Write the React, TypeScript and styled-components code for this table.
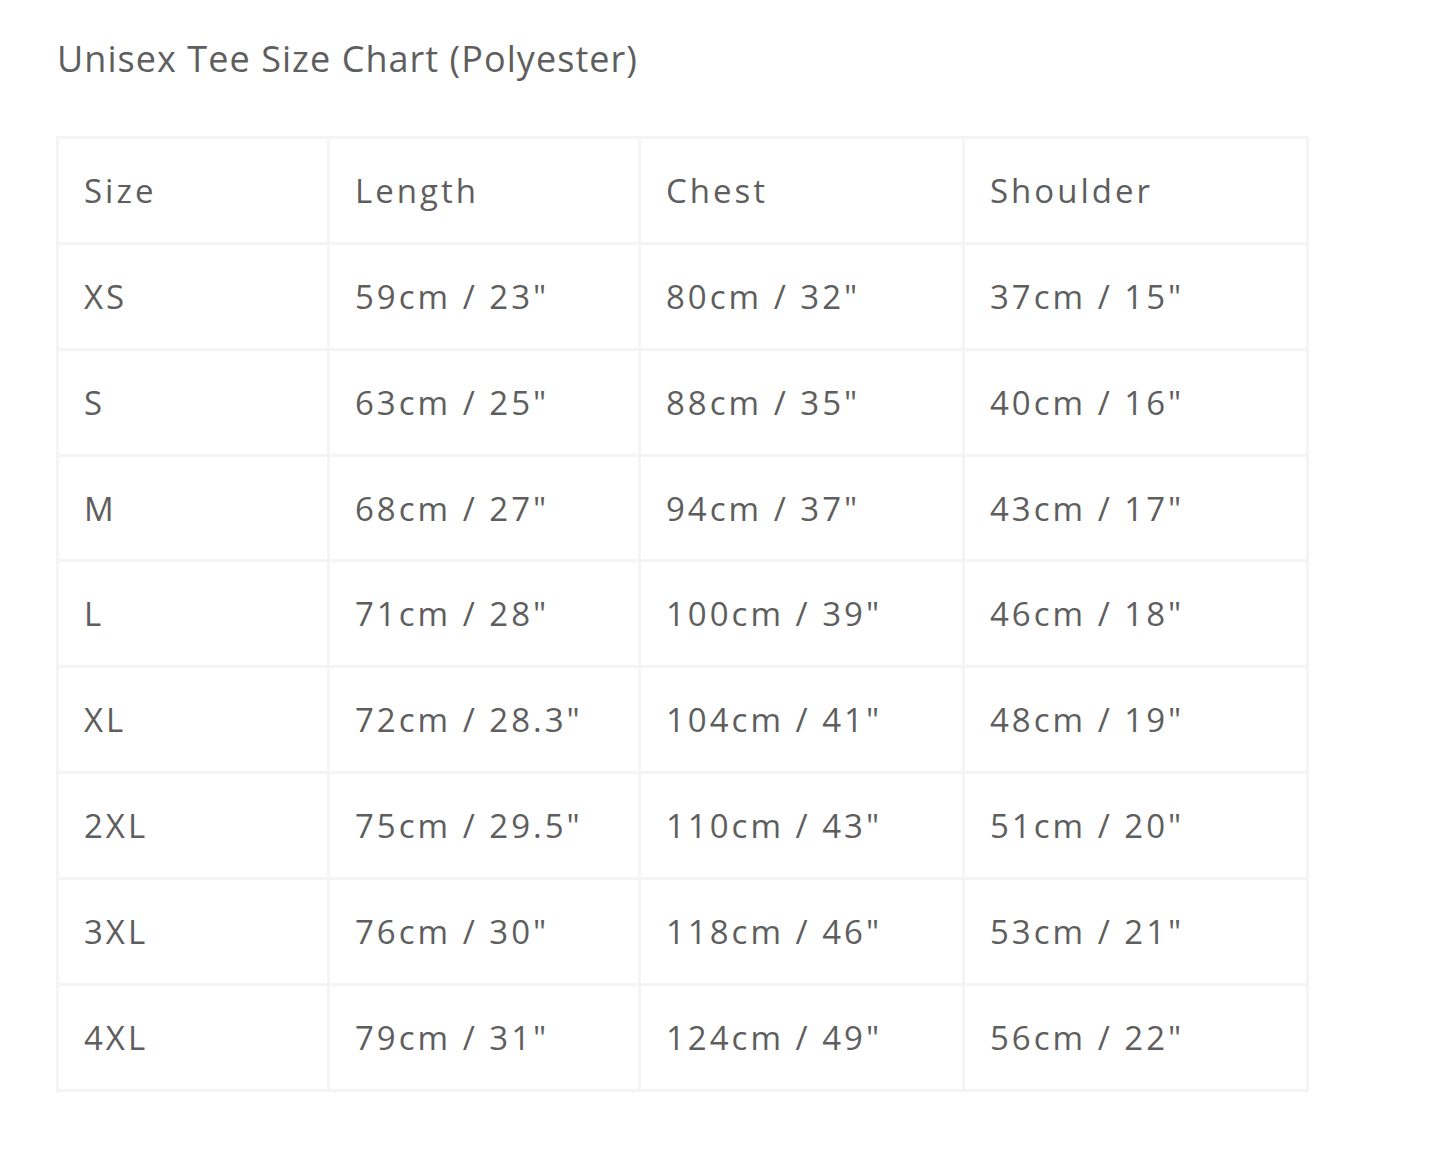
import React from "react";
import styled, { createGlobalStyle } from "styled-components";

const Global = createGlobalStyle`
  html, body { margin: 0; padding: 0; background: #ffffff; }
  body { font-family: "Open Sans", Roboto, Arial, sans-serif; color: #5e5e5e; }
`;

const Page = styled.div`
  padding: 36px 0 0 56px;
`;

const Title = styled.h2`
  margin: 0 0 54px 1px;
  font-weight: 400;
  font-size: 36px;
  line-height: 46px;
  letter-spacing: 1.05px;
  color: #5e5e5e;
`;

const Table = styled.table`
  border-collapse: collapse;
  table-layout: fixed;
  width: 1250px;
`;

const Row = styled.tr`
  height: 105.87px;
`;

const Cell = styled.td`
  border: 3px solid #f4f4f4;
  padding: 0 0 0 25px;
  font-size: 33px;
  letter-spacing: 3px;
  color: #5e5e5e;
  vertical-align: middle;
  white-space: nowrap;
`;

const widths = [271, 311, 324, 344];

const rows: string[][] = [
  ["Size", "Length", "Chest", "Shoulder"],
  ["XS", '59cm / 23"', '80cm / 32"', '37cm / 15"'],
  ["S", '63cm / 25"', '88cm / 35"', '40cm / 16"'],
  ["M", '68cm / 27"', '94cm / 37"', '43cm / 17"'],
  ["L", '71cm / 28"', '100cm / 39"', '46cm / 18"'],
  ["XL", '72cm / 28.3"', '104cm / 41"', '48cm / 19"'],
  ["2XL", '75cm / 29.5"', '110cm / 43"', '51cm / 20"'],
  ["3XL", '76cm / 30"', '118cm / 46"', '53cm / 21"'],
  ["4XL", '79cm / 31"', '124cm / 49"', '56cm / 22"'],
];

export default function App() {
  return (
    <Page>
      <Global />
      <Title>Unisex Tee Size Chart (Polyester)</Title>
      <Table>
        <colgroup>
          {widths.map((w, i) => (
            <col key={i} style={{ width: w }} />
          ))}
        </colgroup>
        <tbody>
          {rows.map((r, i) => (
            <Row key={i}>
              {r.map((c, j) => (
                <Cell key={j}>{c}</Cell>
              ))}
            </Row>
          ))}
        </tbody>
      </Table>
    </Page>
  );
}
